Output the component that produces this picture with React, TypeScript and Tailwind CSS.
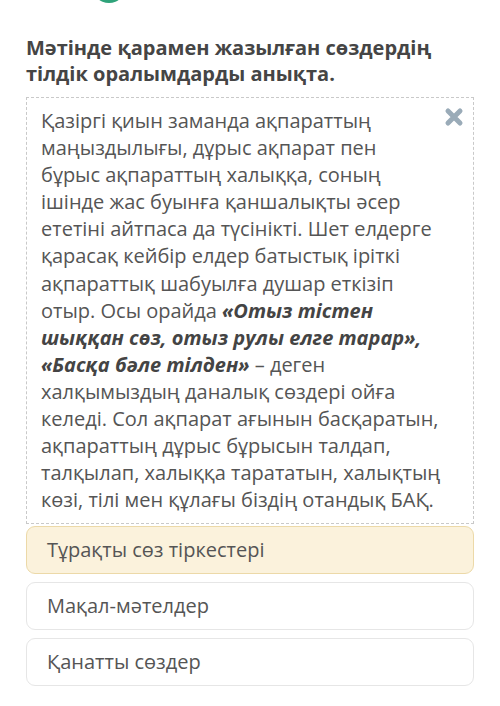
import React from 'react';

const lines: React.ReactNode[] = [
  'Қазіргі қиын заманда ақпараттың',
  'маңыздылығы, дұрыс ақпарат пен',
  'бұрыс ақпараттың халыққа, соның',
  'ішінде жас буынға қаншалықты әсер',
  'ететіні айтпаса да түсінікті. Шет елдерге',
  'қарасақ кейбір елдер батыстық іріткі',
  'ақпараттық шабуылға душар еткізіп',
  <>отыр. Осы орайда <b className="italic font-bold text-[#444]">«Отыз тістен</b></>,
  <b className="italic font-bold text-[#444]">шыққан сөз, отыз рулы елге тарар»,</b>,
  <><b className="italic font-bold text-[#444]">«Басқа бәле тілден»</b> – деген</>,
  'халқымыздың даналық сөздері ойға',
  'келеді. Сол ақпарат ағынын басқаратын,',
  'ақпараттың дұрыс бұрысын талдап,',
  'талқылап, халыққа тарататын, халықтың',
  'көзі, тілі мен құлағы біздің отандық БАҚ.',
];

const options = ['Тұрақты сөз тіркестері', 'Мақал-мәтелдер', 'Қанатты сөздер'];

export default function App() {
  return (
    <div
      className="w-[500px] h-[706px] bg-white overflow-hidden relative"
      style={{ fontFamily: '"Open Sans", "Noto Sans", sans-serif' }}
    >
      {/* green badge peeking from top */}
      <div className="absolute left-[92px] top-[-44px] w-[34px] h-[47px] rounded-full bg-[#2fa37a]" />

      <div className="px-[26px] pt-[35px]">
        <h1 className="text-[20px] leading-[26px] font-bold text-[#454545]">
          Мәтінде қарамен жазылған сөздердің
          <br />
          тілдік оралымдарды анықта.
        </h1>

        {/* passage card */}
        <div className="relative mt-[10px] border border-dashed border-[#c9c9c9] pl-[14px] pr-[10px] pt-[9px] pb-[10px]">
          <button className="absolute right-[9px] top-[9px] p-0 text-[#9aabb8]">
            <svg width="20" height="20" viewBox="0 0 20 20">
              <path d="M4 4 L16 16 M16 4 L4 16" stroke="currentColor" strokeWidth="5" strokeLinecap="round" />
            </svg>
          </button>
          <div className="text-[20px] leading-[27.1px] text-[#555]">
            {lines.map((l, i) => (
              <div key={i} className="whitespace-nowrap">{l}</div>
            ))}
          </div>
        </div>

        {/* answers */}
        <div className="mt-[2px] flex flex-col gap-[8px]">
          {options.map((o, i) => (
            <div
              key={o}
              className={
                i === 0
                  ? 'h-[48px] flex items-center pl-[20px] rounded-[9px] border border-[#ecd9a8] bg-[#fbf2dc] text-[20px] text-[#555]'
                  : 'h-[48px] flex items-center pl-[20px] rounded-[9px] border border-[#e6e6e6] bg-white text-[20px] text-[#555]'
              }
            >
              {o}
            </div>
          ))}
        </div>
      </div>
    </div>
  );
}
